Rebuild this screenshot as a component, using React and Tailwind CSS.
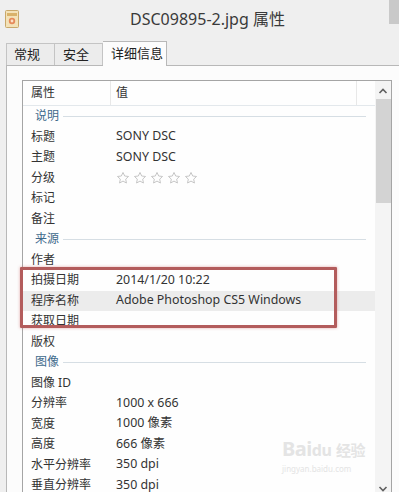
import React from 'react';

const font = { fontFamily: '"Noto Sans", "Noto Sans CJK SC", sans-serif' };

const rows = [
  { type: 'group', label: '说明' },
  { label: '标题', value: 'SONY DSC' },
  { label: '主题', value: 'SONY DSC' },
  { label: '分级', stars: true },
  { label: '标记' },
  { label: '备注' },
  { type: 'group', label: '来源' },
  { label: '作者' },
  { label: '拍摄日期', value: '2014/1/20 10:22' },
  { label: '程序名称', value: 'Adobe Photoshop CS5 Windows', hover: true },
  { label: '获取日期' },
  { label: '版权' },
  { type: 'group', label: '图像' },
  { label: '图像 ID' },
  { label: '分辨率', value: '1000 x 666' },
  { label: '宽度', value: '1000 像素' },
  { label: '高度', value: '666 像素' },
  { label: '水平分辨率', value: '350 dpi' },
  { label: '垂直分辨率', value: '350 dpi' },
];

const Star = () => (
  <svg width="14" height="14" viewBox="0 0 24 24" fill="none" stroke="#c2c2c2" strokeWidth="1.6" strokeLinejoin="round">
    <path d="M12 2.5l2.9 6.1 6.6.8-4.9 4.6 1.3 6.6L12 17.3l-5.9 3.3 1.3-6.6-4.9-4.6 6.6-.8z" />
  </svg>
);

const FileIcon = () => (
  <svg width="14" height="18" viewBox="0 0 14 18">
    <rect x="0.5" y="0.5" width="13" height="17" rx="1" fill="#f3e2b8" stroke="#c9a86a" />
    <rect x="2" y="3" width="10" height="3" fill="#d9b26a" />
    <circle cx="7" cy="11" r="3.2" fill="#e58a5a" />
    <circle cx="7" cy="11" r="1.4" fill="#fbe1c8" />
  </svg>
);

const Row = ({ row }) => {
  if (row.type === 'group') {
    return (
      <div className="h-[20.5px] flex items-center pl-[12px] pr-[9px]">
        <span className="text-[12px] text-[#3e6a8c] mr-[4px]">{row.label}</span>
        <div className="flex-1 h-px bg-[#d6dee4]" />
      </div>
    );
  }
  return (
    <div className={`h-[20.5px] flex items-center text-[12px] text-[#333] ${row.hover ? 'bg-[#ececec]' : ''}`}>
      <div className="w-[93px] pl-[8px] whitespace-nowrap">{row.label}</div>
      <div className="flex-1 whitespace-nowrap text-[12.4px]">
        {row.stars ? (
          <div className="flex gap-[3px] pt-[1px]">
            <Star /><Star /><Star /><Star /><Star />
          </div>
        ) : row.value}
      </div>
    </div>
  );
};

export default function App() {
  return (
    <div className="w-[399px] h-[492px] overflow-hidden bg-[#efefef] relative" style={font}>
      {/* title bar */}
      <div className="h-[37px] relative flex items-center justify-center">
        <div className="absolute left-[5px] top-[10px]"><FileIcon /></div>
        <div className="text-[16px] text-[#3a3a3a] ml-[16px]">DSC09895-2.jpg 属性</div>
        <div className="absolute right-0 top-0 w-[10px] h-[24px] bg-[#c9c9c9]" />
      </div>

      {/* tabs */}
      <div className="h-[28px] pl-[6px] flex items-end relative z-10">
        <div className="h-[22px] w-[49px] border border-b-0 border-[#c4c4c4] bg-[#ececec] text-[13px] text-[#222] pl-[7px] leading-[21px]">常规</div>
        <div className="h-[22px] w-[48px] border border-b-0 border-l-0 border-[#c4c4c4] bg-[#ececec] text-[13px] text-[#222] pl-[8px] leading-[21px]">安全</div>
        <div className="h-[25px] w-[64px] border border-b-0 border-l-0 border-[#b8b8b8] bg-[#fcfcfc] text-[13px] text-[#222] pl-[8px] leading-[22px] mb-[-1px]">详细信息</div>
      </div>

      {/* panel */}
      <div className="ml-[6px] h-[430px] border-l border-t border-[#b8b8b8] bg-[#fcfcfc] pl-[15px] pt-[14px]">
        <div className="w-[370px] h-[420px] border border-[#a5a5a5] bg-[#fefefe] flex">
          <div className="flex-1 flex flex-col">
            {/* header */}
            <div className="h-[25px] flex items-center text-[12px] text-[#333] border-b border-[#e3e8ec]">
              <div className="w-[88px] pl-[8px] h-full flex items-center border-r border-[#e8e8e8]">属性</div>
              <div className="w-[246px] pl-[5px] h-full flex items-center border-r border-[#e8e8e8]">值</div>
            </div>
            {rows.map((r, i) => <Row key={i} row={r} />)}
          </div>
          {/* scrollbar */}
          <div className="w-[16px] bg-[#f4f4f4] flex flex-col items-center">
            <svg width="10" height="18" viewBox="0 0 10 18"><path d="M1.5 12l3.5-3.5L8.5 12" fill="none" stroke="#606060" strokeWidth="1.6" /></svg>
            <div className="w-[15px] h-[104px] bg-[#d3d3d3]" />
            <div className="flex-1" />
            <svg width="10" height="18" viewBox="0 0 10 18"><path d="M1.5 6l3.5 3.5L8.5 6" fill="none" stroke="#606060" strokeWidth="1.6" /></svg>
          </div>
        </div>
      </div>

      {/* highlight box */}
      <div className="absolute left-[20px] top-[267px] w-[317px] h-[61px] border-[3px] border-[#b35c5c] rounded-[1px] shadow-[0_0_3px_rgba(200,80,80,0.5)]" />

      {/* watermark */}
      <div className="absolute left-[282px] top-[438px] text-[#e4e4e4] flex flex-col gap-[3px]">
        <div className="text-[20px] font-bold tracking-tight leading-[22px]">Bai<span className="text-[16px]">du</span> <span className="text-[15px]">经验</span></div>
        <div className="text-[8px] leading-[10px]">jingyan.baidu.com</div>
      </div>
    </div>
  );
}
